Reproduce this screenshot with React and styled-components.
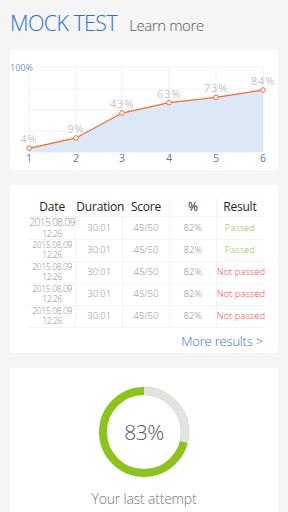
import React from 'react';
import styled, { createGlobalStyle } from 'styled-components';

const GlobalStyle = createGlobalStyle`
  html, body {
    margin: 0;
    padding: 0;
    background: #f5f5f5;
    font-family: "Open Sans", "Noto Sans", sans-serif;
  }
`;

const Page = styled.div`
  width: 288px;
  height: 512px;
  overflow: hidden;
  background: #f5f5f5;
`;

const Header = styled.div`
  display: flex;
  align-items: baseline;
  gap: 12px;
  height: 50px;
  box-sizing: border-box;
  padding: 8px 10px 0;
`;

const Title = styled.h1`
  margin: 0;
  font-size: 21.5px;
  font-weight: 300;
  line-height: 30px;
  letter-spacing: -0.6px;
  color: #1f72cf;
`;

const LearnMore = styled.span`
  font-size: 15px;
  font-weight: 300;
  letter-spacing: -0.4px;
  color: #555;
`;

const Card = styled.section`
  margin: 0 10px ${p => p.$gap || 15}px;
  background: #fff;
  box-sizing: border-box;
  height: ${p => p.$height}px;
  padding: ${p => p.$pad || '0'};
`;

const ChartSvg = styled.svg`
  display: block;
  font-family: "Open Sans", sans-serif;
`;

const Table = styled.table`
  width: 234px;
  border-collapse: collapse;
  table-layout: fixed;
`;

const Th = styled.th`
  height: 18px;
  padding: 0;
  font-size: 12px;
  font-weight: 400;
  line-height: 16px;
  letter-spacing: -0.2px;
  color: #222;
  border: 1px solid #f3f3f3;
  border-top: none;
  white-space: nowrap;
  &:first-child { border-left: none; }
  &:last-child { border-right: none; }
`;

const Td = styled.td`
  height: 21px;
  padding: 0;
  text-align: center;
  font-size: 9.5px;
  font-weight: 300;
  line-height: 10px;
  color: ${p => p.$color || '#8a8a8a'};
  border: 1px solid #f3f3f3;
  white-space: nowrap;
  &:first-child { border-left: none; }
  &:last-child { border-right: none; }
`;

const DateLine = styled.div`
  font-size: ${p => (p.$big ? 10 : 8.5)}px;
  line-height: ${p => (p.$big ? 11.5 : 10)}px;
  letter-spacing: ${p => (p.$big ? -0.5 : -0.3)}px;
`;

const MoreRow = styled.div`
  display: flex;
  justify-content: flex-end;
  width: 234px;
  margin-top: 4px;
`;

const MoreLink = styled.a`
  font-size: 13px;
  font-weight: 300;
  letter-spacing: -0.2px;
  color: #2f72c6;
  text-decoration: none;
`;

const Gauge = styled.div`
  display: flex;
  flex-direction: column;
  align-items: center;
`;

const Ring = styled.div`
  position: relative;
  width: 90px;
  height: 90px;
`;

const RingValue = styled.div`
  position: absolute;
  inset: 0;
  display: flex;
  align-items: center;
  justify-content: center;
  font-size: 21px;
  font-weight: 300;
  letter-spacing: -0.5px;
  color: #555;
`;

const Caption = styled.div`
  margin-top: 12px;
  font-size: 14px;
  font-weight: 300;
  letter-spacing: -0.2px;
  color: #777;
`;

const xs = [19, 66, 112, 159, 206, 253];
const points = [
  { y: 98.3, label: '4%' },
  { y: 88, label: '9%' },
  { y: 63, label: '43%' },
  { y: 52.7, label: '63%' },
  { y: 47.3, label: '73%' },
  { y: 40, label: '84%' },
];
const gridY = [17, 39, 60, 81, 102];

const results = [
  { passed: true },
  { passed: true },
  { passed: false },
  { passed: false },
  { passed: false },
];

function Chart() {
  const line = points.map((p, i) => `${xs[i]},${p.y}`).join(' ');
  const area = `${xs[0]},102 ${line} ${xs[5]},102`;
  return (
    <ChartSvg width="268" height="120" viewBox="0 0 268 120">
      {gridY.map(y => (
        <line key={y} x1={xs[0]} x2={xs[5]} y1={y} y2={y} stroke="#f0f0f0" strokeWidth="1" />
      ))}
      {xs.map(x => (
        <line key={x} x1={x} x2={x} y1={17} y2={102} stroke="#f0f0f0" strokeWidth="1" />
      ))}
      <polygon points={area} fill="#dce8f5" />
      <polyline points={line} fill="none" stroke="#f36b2d" strokeWidth="1.3" />
      {points.map((p, i) => (
        <g key={i}>
          <circle cx={xs[i]} cy={p.y} r="2.3" fill="#fff" stroke="#f36b2d" strokeWidth="1" />
          <text x={xs[i]} y={p.y - 5} textAnchor="middle" fontSize="11" fill="#c4c4c4" letterSpacing="0.8">
            {p.label}
          </text>
          <text x={xs[i]} y="112" textAnchor="middle" fontSize="10.5" fill="#4b7cc2">
            {i + 1}
          </text>
        </g>
      ))}
      <text x="0" y="20.5" fontSize="9" fill="#7393cf">100%</text>
    </ChartSvg>
  );
}

function Donut() {
  const r = 41;
  const c = 2 * Math.PI * r;
  const grey = (104 / 360) * c;
  return (
    <Ring>
      <svg width="90" height="90" viewBox="0 0 90 90">
        <circle cx="45" cy="45" r={r} fill="none" stroke="#8dc21f" strokeWidth="8" />
        <circle
          cx="45"
          cy="45"
          r={r}
          fill="none"
          stroke="#e2e2e2"
          strokeWidth="8"
          strokeDasharray={`${grey} ${c}`}
          transform="rotate(-90 45 45)"
        />
      </svg>
      <RingValue>83%</RingValue>
    </Ring>
  );
}

export default function App() {
  return (
    <Page>
      <GlobalStyle />
      <Header>
        <Title>MOCK TEST</Title>
        <LearnMore>Learn more</LearnMore>
      </Header>

      <Card $height={120}>
        <Chart />
      </Card>

      <Card $height={168} $pad="13px 0 0 19px">
        <Table>
          <thead>
            <tr>
              <Th>Date</Th>
              <Th>Duration</Th>
              <Th>Score</Th>
              <Th>%</Th>
              <Th>Result</Th>
            </tr>
          </thead>
          <tbody>
            {results.map((r, i) => (
              <tr key={i}>
                <Td>
                  <DateLine $big={i === 0}>2015.08.09</DateLine>
                  <DateLine>12:26</DateLine>
                </Td>
                <Td>30:01</Td>
                <Td>45/50</Td>
                <Td>82%</Td>
                <Td $color={r.passed ? '#8cc152' : '#f0444c'}>
                  {r.passed ? 'Passed' : 'Not passed'}
                </Td>
              </tr>
            ))}
          </tbody>
        </Table>
        <MoreRow>
          <MoreLink href="#">More results &gt;</MoreLink>
        </MoreRow>
      </Card>

      <Card $height={160} $pad="19px 0 0">
        <Gauge>
          <Donut />
          <Caption>Your last attempt</Caption>
        </Gauge>
      </Card>
    </Page>
  );
}
